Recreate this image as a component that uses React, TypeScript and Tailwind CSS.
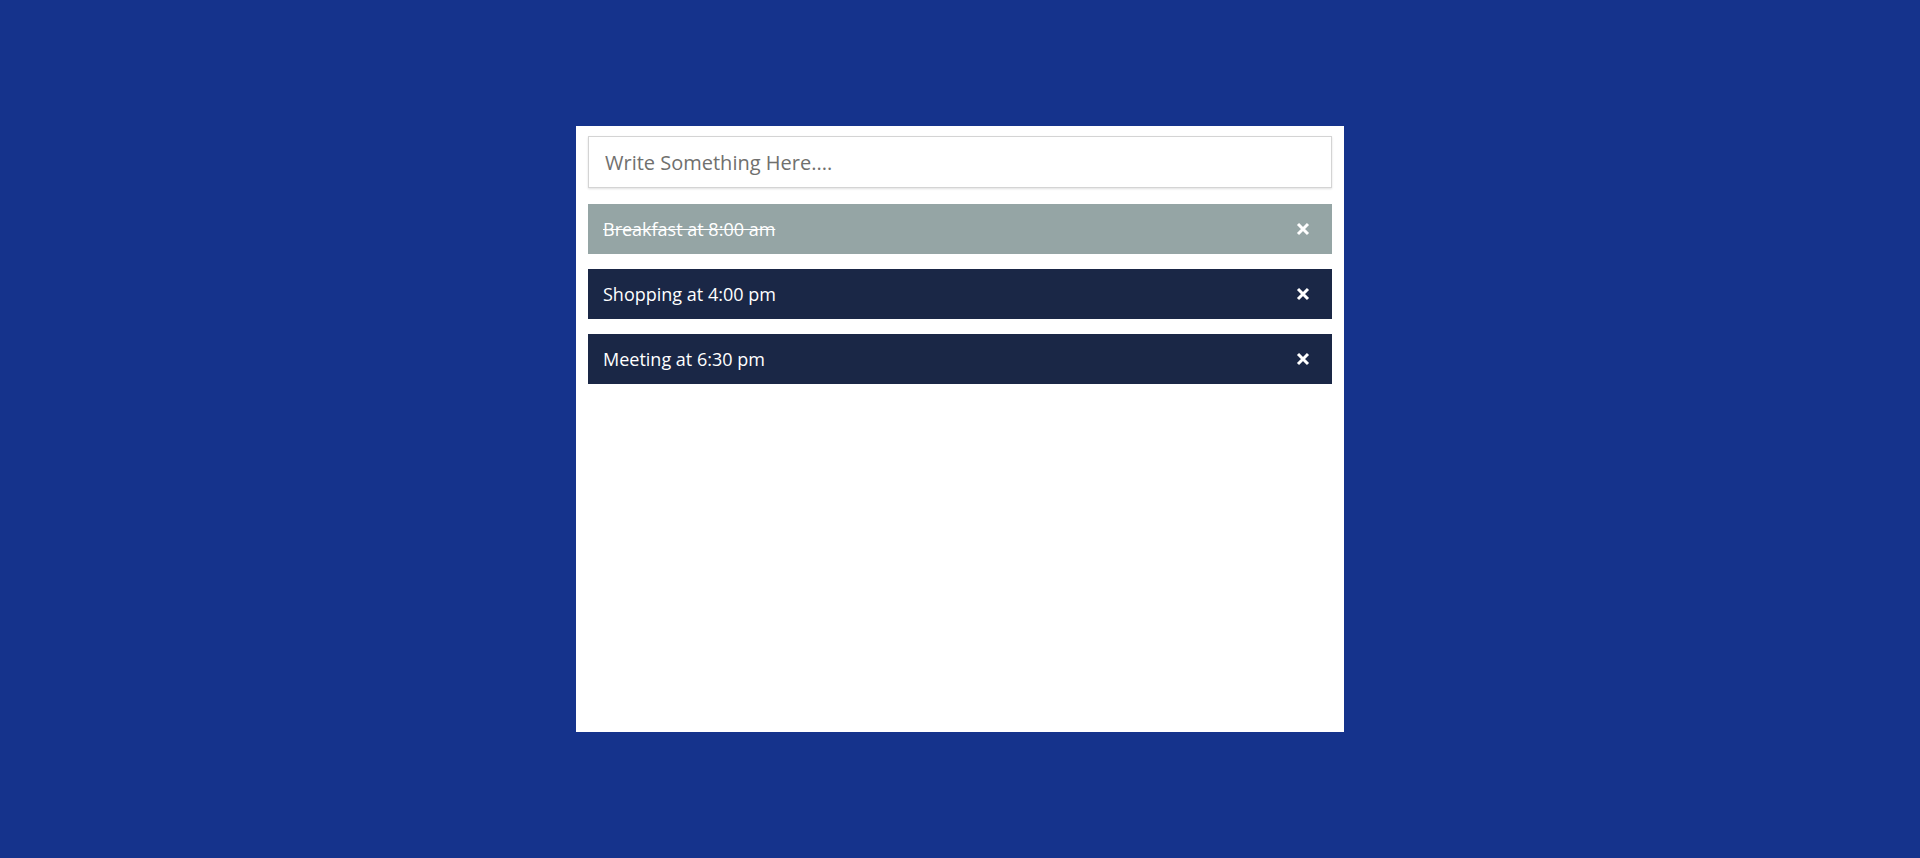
const todos = [
  { id: 1, text: 'Breakfast at 8:00 am', done: true },
  { id: 2, text: 'Shopping at 4:00 pm', done: false },
  { id: 3, text: 'Meeting at 6:30 pm', done: false },
]

function CloseIcon() {
  return (
    <svg width="14" height="14" viewBox="0 0 14 14" fill="none">
      <path d="M2 2 L12 12 M12 2 L2 12" stroke="white" strokeWidth="3" strokeLinecap="butt" />
    </svg>
  )
}

export default function App() {
  return (
    <div
      className="min-h-screen h-[858px] bg-[#15338c] flex items-center justify-center"
      style={{ fontFamily: '"Open Sans", "Noto Sans", sans-serif' }}
    >
      <div className="w-[768px] h-[606px] bg-white px-3 pt-2.5 flex flex-col">
        <input
          type="text"
          placeholder="Write Something Here...."
          className="w-full h-[52px] border border-[#d4d4d4] shadow-[0_1px_2px_rgba(0,0,0,0.12)] px-4 text-[20px] text-[#555] placeholder:text-[#70706e] outline-none mb-4"
        />
        <ul className="flex flex-col gap-[15px]">
          {todos.map((t) => (
            <li
              key={t.id}
              className={`h-[50px] flex items-center justify-between pl-[15px] pr-[22px] text-white text-[18px] ${
                t.done ? 'bg-[#95a5a5] line-through' : 'bg-[#1a2746]'
              }`}
            >
              <span>{t.text}</span>
              <CloseIcon />
            </li>
          ))}
        </ul>
      </div>
    </div>
  )
}
